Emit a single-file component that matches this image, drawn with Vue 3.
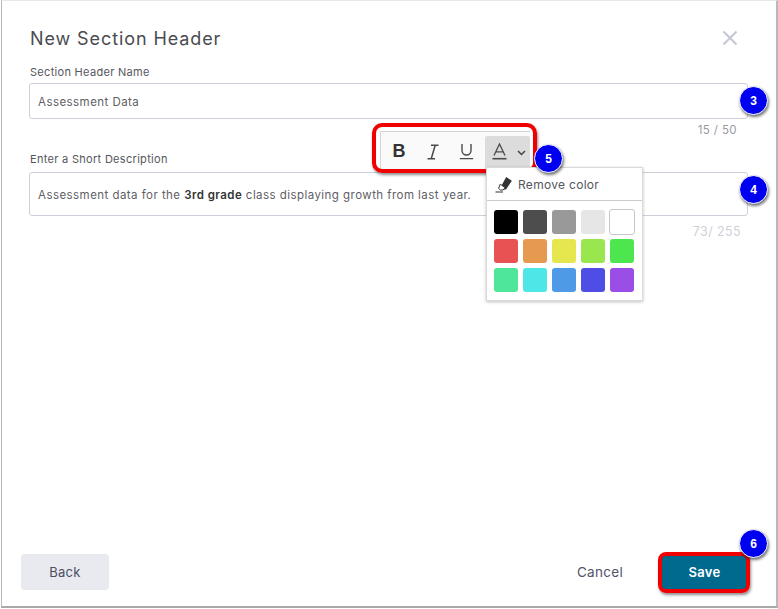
<script setup>
const swatches = [
  '#000000', '#4d4d4d', '#999999', '#e6e6e6', '#ffffff',
  '#e95252', '#e69a4f', '#e6e64e', '#9ae64e', '#4ee64e',
  '#4ee69a', '#4ee6e6', '#4f9ae6', '#4e4ee6', '#9a4ee6'
]
const badges = [
  { n: 3, cls: 'b3' },
  { n: 4, cls: 'b4' },
  { n: 5, cls: 'b5' },
  { n: 6, cls: 'b6' }
]
</script>

<template>
  <div class="page">
    <div class="modal">
      <header class="head">
        <h1 class="title">New Section Header</h1>
        <svg class="close" width="16" height="16" viewBox="0 0 16 16">
          <path d="M1.5 1.5 14.5 14.5M14.5 1.5 1.5 14.5" stroke="#c6c8d4" stroke-width="2.2" fill="none" />
        </svg>
      </header>

      <label class="label first">Section Header Name</label>
      <div class="field name">Assessment Data</div>
      <div class="count c1">15 / 50</div>

      <label class="label second">Enter a Short Description</label>
      <div class="field desc">Assessment data for the&nbsp;<b>3rd grade</b>&nbsp;class displaying growth from last year.</div>
      <div class="count c2">73/ 255</div>

      <footer class="foot">
        <button class="btn back">Back</button>
        <button class="btn cancel">Cancel</button>
        <button class="btn save">Save</button>
      </footer>
    </div>

    <div class="toolbar">
      <span class="tool bold">B</span>
      <span class="tool ital">
        <svg width="14" height="16" viewBox="0 0 14 16"><path d="M5 1.2h7.5M1.5 14.8h7.5M9.2 1.2 5.2 14.8" stroke="#4a4a4a" stroke-width="1.5" fill="none" /></svg>
      </span>
      <span class="tool under">
        <svg width="15" height="17" viewBox="0 0 15 17"><path d="M3 1v6.5a4.5 4.5 0 0 0 9 0V1M0.8 15.6h13.4" stroke="#4a4a4a" stroke-width="1.4" fill="none" /></svg>
      </span>
      <span class="tool color">
        <svg width="15" height="17" viewBox="0 0 15 17"><path d="M2 12.5 7.5 1l5.5 11.5M3.8 8.8h7.4" stroke="#4a4a4a" stroke-width="1.3" fill="none" /><path d="M0.5 15.7h14" stroke="#4a4a4a" stroke-width="1.6" /></svg>
        <svg class="chev" width="9" height="6" viewBox="0 0 9 6"><path d="M1 1 4.5 4.5 8 1" stroke="#444" stroke-width="1.5" fill="none" /></svg>
      </span>
    </div>
    <div class="redbox tb"></div>

    <div class="menu">
      <div class="remove">
        <svg width="17" height="17" viewBox="0 0 17 17">
          <path d="M6 10.5 11.2 1 16.8 4.8 11 13.6H8.2Z" fill="#333" />
          <path d="M5.2 8.2 10 11.6 8.2 14H5.4L3.6 12.4Z" fill="#fff" stroke="#333" stroke-width="1" />
          <path d="M0.5 16H8" stroke="#333" stroke-width="1" />
        </svg>
        <span>Remove color</span>
      </div>
      <div class="grid">
        <span
          v-for="c in swatches"
          :key="c"
          class="swatch"
          :class="{ blank: c === '#ffffff' }"
          :style="{ background: c }"
        ></span>
      </div>
    </div>

    <div class="redbox sv"></div>

    <span v-for="b in badges" :key="b.n" class="badge" :class="b.cls">{{ b.n }}</span>
  </div>
</template>

<style>
html, body { margin: 0; background: #fff; }
</style>

<style scoped>
.page {
  position: relative;
  width: 778px;
  height: 609px;
  overflow: hidden;
  background: #fff;
  font-family: Inter, "Liberation Sans", sans-serif;
  color: #4a4c55;
}
.modal {
  box-sizing: border-box;
  width: 777px;
  height: 608px;
  margin-left: 1px;
  padding: 0 29px 0 27px;
  display: flex;
  flex-direction: column;
  background: #fff;
  border-style: solid;
  border-width: 1px 2px 2px 1px;
  border-color: #e8e8e8 #b9b9b9 #a9a9a9 #b9b9b9;
}
.head {
  display: flex;
  align-items: center;
  justify-content: space-between;
  height: 40px;
  margin-top: 17px;
}
.title {
  margin: 0 0 0 1px;
  font-size: 18px;
  font-weight: 400;
  letter-spacing: 0.9px;
  color: #4a4b50;
}
.close { margin-right: 9px; }
.label {
  display: block;
  margin-left: 1px;
  font-size: 11px;
  line-height: 14px;
  letter-spacing: 0.3px;
  color: #55565c;
}
.first { margin-top: 7px; }
.second { margin-top: 15px; }
.field {
  box-sizing: border-box;
  display: flex;
  align-items: center;
  width: 719px;
  padding: 1px 8px 0;
  border: 1px solid #cfd0d9;
  border-radius: 3px;
  font-size: 11.5px;
  letter-spacing: 0.45px;
  color: #5f6066;
  white-space: nowrap;
}
.field b { color: #333; font-weight: 600; }
.name { height: 36px; margin-top: 4px; }
.desc { height: 44px; margin-top: 6px; }
.count {
  font-size: 11.5px;
  line-height: 14px;
  letter-spacing: 0.4px;
  text-align: right;
  height: 14px;
}
.c1 { width: 708px; margin-top: 4px; color: #9a9a9f; }
.c2 { width: 712px; margin-top: 9px; color: #d0d1d8; font-size: 12.5px; }
.foot {
  margin-top: auto;
  margin-bottom: 16px;
  margin-left: -8px;
  width: 727px;
  display: flex;
  align-items: center;
}
.btn {
  box-sizing: border-box;
  height: 36px;
  border: 0;
  border-radius: 4px;
  font-family: inherit;
  font-size: 13px;
  letter-spacing: 0.3px;
  padding: 0;
}
.back { width: 88px; background: #e9eaef; color: #4b4e66; }
.cancel { margin-left: auto; width: 60px; background: transparent; color: #51546a; font-size: 13.5px; }
.save { margin-left: 31px; width: 87px; background: #006a8e; color: #fff; font-weight: 600; }

.toolbar {
  position: absolute;
  left: 380px;
  top: 131px;
  width: 150px;
  height: 38px;
  box-sizing: border-box;
  display: flex;
  align-items: stretch;
  padding-top: 4px;
  background: #fafafa;
  border: 1px solid #d4d4d4;
  border-width: 1px 0 0 1px;
}
.tool {
  display: flex;
  flex: none;
  box-sizing: border-box;
  align-items: center;
  justify-content: center;
  padding-bottom: 2px;
  color: #444;
}
.bold { width: 36px; font-size: 18px; font-weight: 700; font-family: "Liberation Sans", sans-serif; color: #333; }
.ital { width: 32px; }
.under { width: 34px; }
.color { width: 45px; margin-left: 2px; justify-content: flex-start; padding-left: 7px; gap: 10px; background: #dcdcdc; border-radius: 2px; }
.chev { margin-top: 2px; }

.redbox {
  position: absolute;
  box-sizing: border-box;
  border: 4px solid #f00000;
  border-radius: 10px;
  box-shadow: 1px 2px 3px rgba(0, 0, 0, 0.45), inset 0 0 1px rgba(0, 0, 0, 0.2);
  pointer-events: none;
}
.tb { left: 372px; top: 123px; width: 165px; height: 50px; }
.sv { left: 658px; top: 552px; width: 92px; height: 41px; border-radius: 8px; }

.menu {
  position: absolute;
  left: 486px;
  top: 167px;
  width: 157px;
  height: 134px;
  box-sizing: border-box;
  background: #fff;
  border: 1px solid #dadada;
  box-shadow: 0 1px 3px rgba(0, 0, 0, 0.25);
}
.remove {
  display: flex;
  align-items: center;
  gap: 6px;
  height: 33px;
  box-sizing: border-box;
  padding-left: 8px;
  border-bottom: 1px solid #ccc;
  font-size: 12px;
  letter-spacing: 0.3px;
  color: #55565c;
}
.grid {
  display: grid;
  grid-template-columns: repeat(5, 24px);
  grid-auto-rows: 24px;
  gap: 5px;
  padding: 9px 0 0 7px;
}
.swatch { border-radius: 3px; box-sizing: border-box; }
.blank { border: 1px solid #c8c8c8; margin: -1px; }

.badge {
  position: absolute;
  box-sizing: border-box;
  width: 29px;
  height: 29px;
  display: flex;
  align-items: center;
  justify-content: center;
  border-radius: 50%;
  background: #0000f0;
  border: 1.5px solid #fff;
  box-shadow: 1px 2px 3px rgba(0, 0, 0, 0.55);
  color: #fff;
  font-family: "Liberation Sans", sans-serif;
  font-size: 12px;
  font-weight: 700;
}
.b3 { left: 739px; top: 86px; }
.b4 { left: 739px; top: 175px; }
.b5 { left: 534px; top: 144px; }
.b6 { left: 739px; top: 529px; }
</style>
